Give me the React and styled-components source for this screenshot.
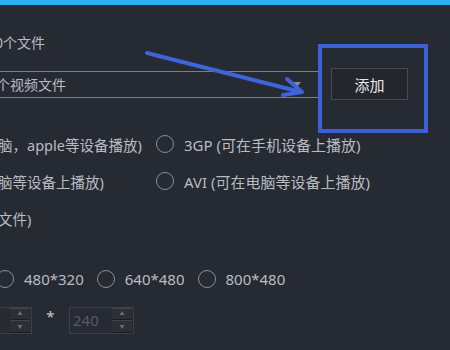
import React from "react";
import styled, { createGlobalStyle } from "styled-components";

const GlobalStyle = createGlobalStyle`
  html, body {
    margin: 0;
    padding: 0;
    background: #262a32;
    overflow: hidden;
  }
  body {
    font-family: "Noto Sans", "Noto Sans CJK SC", sans-serif;
    font-size: 14px;
    color: #b9bcc2;
  }
`;

const Page = styled.div`
  position: relative;
  width: 450px;
  height: 350px;
  overflow: hidden;
  background: #262a32;
`;

const TopBar = styled.div`
  height: 5px;
  background: #27b2ee;
`;

const Form = styled.div`
  display: flex;
  flex-direction: column;
  margin-left: -5px;
  padding-top: 28px;
`;

const Line = styled.div`
  height: 20px;
  line-height: 20px;
  white-space: nowrap;
`;

const FileRow = styled.div`
  display: flex;
  align-items: center;
  gap: 12px;
  margin-top: 15px;
  height: 32px;
`;

const Select = styled.div`
  position: relative;
  box-sizing: border-box;
  width: 324px;
  height: 27px;
  line-height: 25px;
  border: 1px solid #7b7e84;
  padding-left: 0;
  color: #b9bcc2;
  white-space: nowrap;
  &::after {
    content: "";
    position: absolute;
    right: 17px;
    top: 10px;
    border-left: 5px solid transparent;
    border-right: 5px solid transparent;
    border-top: 6px solid #8a8c90;
  }
`;

const Button = styled.button`
  box-sizing: border-box;
  width: 77px;
  height: 32px;
  background: #23262c;
  border: 1px solid #46494f;
  color: #e6e7e9;
  font-family: inherit;
  font-size: 15px;
  padding: 0;
`;

const FormatGrid = styled.div`
  display: grid;
  grid-template-columns: 161px auto;
  row-gap: 17px;
  margin-top: 34px;
`;

const Option = styled.div`
  display: flex;
  align-items: center;
  height: 20px;
  white-space: nowrap;
  gap: 10px;
  font-size: ${(p) => p.$size || 15}px;
  padding-left: ${(p) => p.$indent || 0}px;
`;

const Radio = styled.span`
  box-sizing: border-box;
  width: 18px;
  height: 18px;
  border-radius: 50%;
  border: 1.5px solid #8b8e93;
  flex: none;
`;

const SizeRow = styled.div`
  display: flex;
  align-items: center;
  gap: 13px;
  margin-top: 41px;
  padding-left: 1px;
`;

const SpinRow = styled.div`
  display: flex;
  align-items: center;
  margin-top: 18px;
  height: 26px;
`;

const Spinner = styled.div`
  display: flex;
  box-sizing: border-box;
  height: 27px;
  border: 1px solid #3c3f46;
  border-left: ${(p) => (p.$cut ? "none" : "1px solid #3c3f46")};
`;

const SpinInput = styled.div`
  width: ${(p) => p.$w}px;
  line-height: 25px;
  padding-left: 3px;
  color: #595c62;
  font-size: 15px;
`;

const SpinButtons = styled.div`
  display: flex;
  flex-direction: column;
  width: 20px;
  margin-right: 1px;
`;

const SpinButton = styled.div`
  flex: 1;
  background: #2c2f35;
  border-top: 1px solid #3f434a;
  border-bottom: 1px solid #1c1e22;
  display: flex;
  align-items: center;
  justify-content: center;
  color: #6b6e74;
  font-size: 5px;
  line-height: 1;
`;

const Times = styled.span`
  width: 37px;
  text-align: center;
  color: #c9cbcf;
  font-size: 15px;
  margin-top: -8px;
`;

const Highlight = styled.div`
  position: absolute;
  left: 318px;
  top: 44px;
  width: 110px;
  height: 89px;
  box-sizing: border-box;
  border: 4px solid #3b61d4;
  pointer-events: none;
`;

const Arrow = styled.svg`
  position: absolute;
  left: 0;
  top: 0;
  pointer-events: none;
`;

function Spin({ value, width, cut }) {
  return (
    <Spinner $cut={cut}>
      <SpinInput $w={width}>{value}</SpinInput>
      <SpinButtons>
        <SpinButton>▲</SpinButton>
        <SpinButton>▼</SpinButton>
      </SpinButtons>
    </Spinner>
  );
}

export default function App() {
  const sizes = ["480*320", "640*480", "800*480"];
  return (
    <Page>
      <GlobalStyle />
      <TopBar />
      <Form>
        <Line>0个文件</Line>
        <FileRow>
          <Select>个视频文件</Select>
          <Button>添加</Button>
        </FileRow>
        <FormatGrid>
          <Option $indent={3} $size={14.5}>脑，apple等设备播放)</Option>
          <Option>
            <Radio />
            3GP (可在手机设备上播放)
          </Option>
          <Option $indent={3} $size={14.5}>脑等设备上播放)</Option>
          <Option>
            <Radio />
            AVI (可在电脑等设备上播放)
          </Option>
          <Option $indent={3} $size={14.5}>文件)</Option>
        </FormatGrid>
        <SizeRow>
          {sizes.map((s) => (
            <Option key={s}>
              <Radio />
              {s}
            </Option>
          ))}
        </SizeRow>
        <SpinRow>
          <Spin width={12} cut />
          <Times>*</Times>
          <Spin value="240" width={39} />
        </SpinRow>
      </Form>
      <Highlight />
      <Arrow width="450" height="350" viewBox="0 0 450 350">
        <g stroke="#3d64d8" strokeWidth="4" strokeLinecap="round" strokeLinejoin="round" fill="none">
          <line x1="147" y1="53" x2="301" y2="92" />
          <polyline points="287,79 302,92 283,95" />
        </g>
      </Arrow>
    </Page>
  );
}
